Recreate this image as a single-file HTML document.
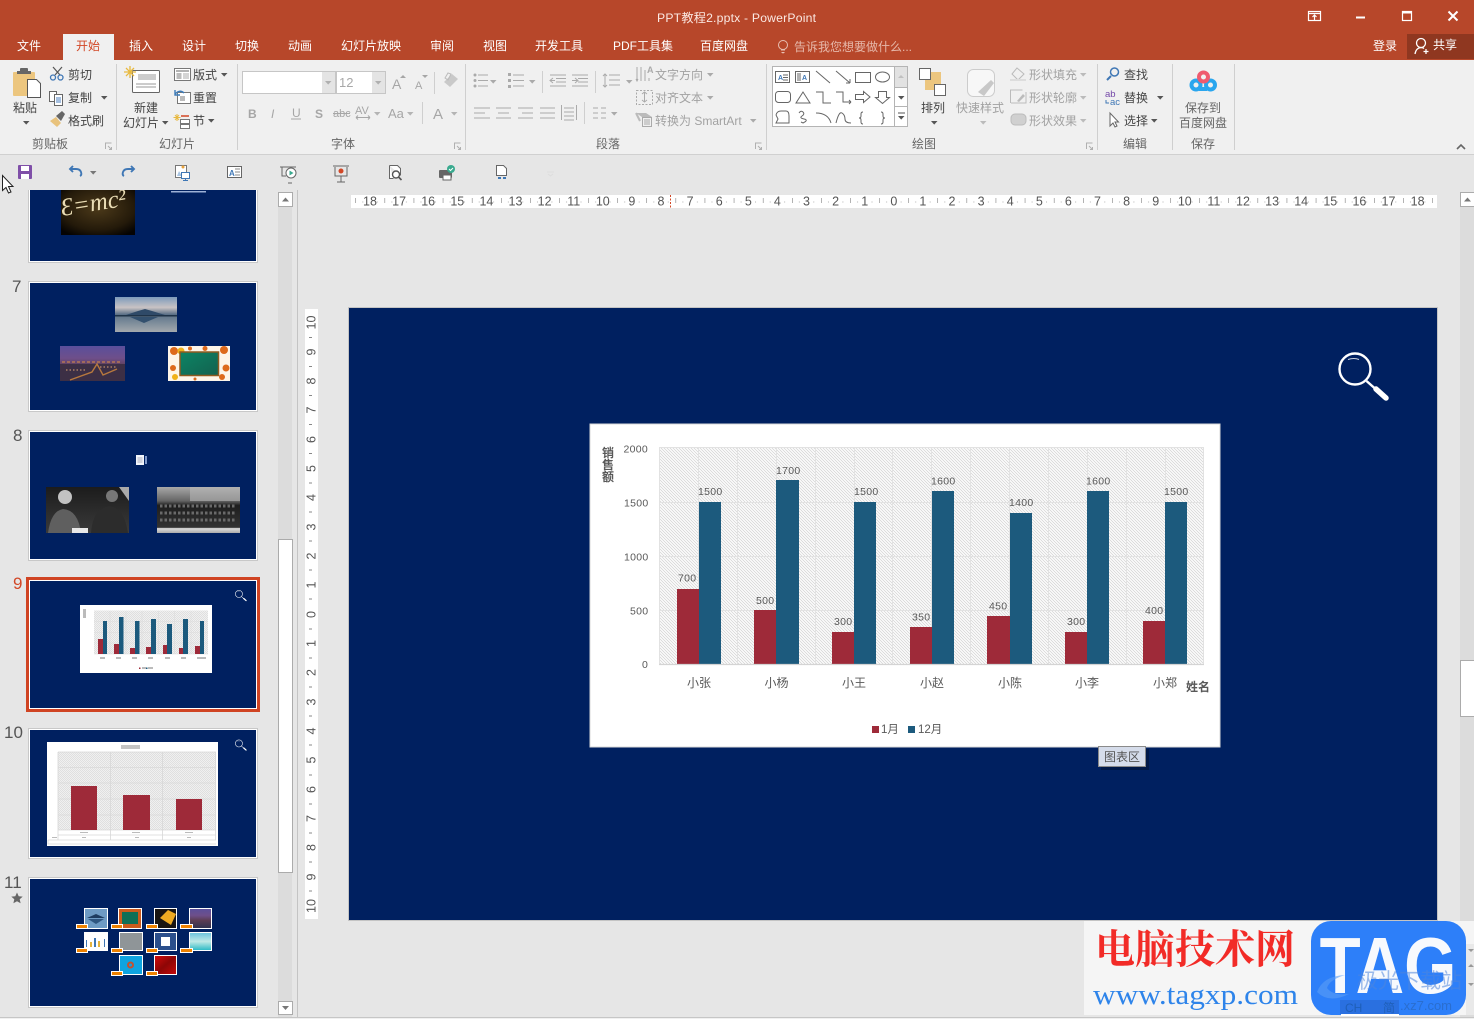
<!DOCTYPE html>
<html lang="zh-CN">
<head>
<meta charset="utf-8">
<title>PPT教程2.pptx - PowerPoint</title>
<style>
html,body{margin:0;padding:0;background:#e6e6e6;width:1474px;height:1019px;overflow:hidden}
svg{display:block;position:absolute;left:0;top:0}
text{font-family:"Liberation Sans","Noto Sans CJK SC",sans-serif;font-size:12px}
.d{fill:#444}.g{fill:#a2a2a2}.w{fill:#fff}.l{fill:#666}
.t{fill:#fbe9e3}
.n{font-size:10.5px;fill:#595959;letter-spacing:.3px}
.c{fill:#595959;text-anchor:middle}
.r{font-size:12.5px;fill:#555;text-anchor:middle}
.s{fill:#555;font-size:17px}
.ln{fill:none;stroke:#666;stroke-width:1}
.lg{fill:none;stroke:#aaa;stroke-width:1}
.sep{stroke:#cfcfcf;stroke-width:1}
</style>
</head>
<body>
<svg width="1474" height="1019" viewBox="0 0 1474 1019" xmlns="http://www.w3.org/2000/svg">
<defs>
<pattern id="h" width="3" height="3" patternUnits="userSpaceOnUse"><rect width="3" height="3" fill="#fff"/><path d="M-1 2L1 4M0 0L3 3M2-1L4 1" stroke="#d6d6d6" stroke-width=".85"/></pattern>
<pattern id="h2" width="2" height="2" patternUnits="userSpaceOnUse"><rect width="2" height="2" fill="#f4f4f4"/><path d="M0 0L2 2" stroke="#d8d8d8" stroke-width=".7"/></pattern>
<pattern id="rt" x="355.500" y="0" width="29.100" height="20" patternUnits="userSpaceOnUse"><path d="M0 3v5" stroke="#666" stroke-width="1"/><circle cx="7.300" cy="7" r=".5" fill="#999"/><circle cx="21.800" cy="7" r=".5" fill="#999"/></pattern>
<symbol id="ar" width="7" height="4" overflow="visible"><path d="M0 0h6.500L3.200 3.600z"/></symbol>
<symbol id="mag" viewBox="0 0 52 50" overflow="visible"><circle cx="17" cy="17" r="15.500" fill="none" stroke="#fff" stroke-width="2.400"/><path d="M10 7.500q6-2 11 0" fill="none" stroke="#fff" stroke-width="1" opacity=".8"/><path d="M28.500 29L37 36.500" stroke="#fff" stroke-width="2.400"/><path d="M38 37L48 46" stroke="#fff" stroke-width="5.500" stroke-linecap="round"/></symbol>
<linearGradient id="mt" x1="0" y1="0" x2="0" y2="1"><stop offset="0" stop-color="#7d9bbb"/><stop offset=".3" stop-color="#c9c3c4"/><stop offset=".5" stop-color="#5a6f86"/><stop offset=".62" stop-color="#6d8092"/><stop offset="1" stop-color="#a3a9ad"/></linearGradient>
<linearGradient id="ct" x1="0" y1="0" x2="0" y2="1"><stop offset="0" stop-color="#5a4f9c"/><stop offset=".35" stop-color="#6e4f8a"/><stop offset=".6" stop-color="#5b3c52"/><stop offset="1" stop-color="#2f3350"/></linearGradient>
<linearGradient id="gb" x1="0" y1="0" x2="1" y2="1"><stop offset="0" stop-color="#0c8464"/><stop offset="1" stop-color="#13614f"/></linearGradient>
<radialGradient id="em" cx=".5" cy=".4" r=".7"><stop offset="0" stop-color="#4c3a1a"/><stop offset=".7" stop-color="#241a0a"/><stop offset="1" stop-color="#050302"/></radialGradient>
<linearGradient id="bw" x1="0" y1="0" x2="0" y2="1"><stop offset="0" stop-color="#1c1c1c"/><stop offset="1" stop-color="#3a3a3a"/></linearGradient>
<linearGradient id="bw2" x1="0" y1="0" x2="0" y2="1"><stop offset="0" stop-color="#a8a8a8"/><stop offset=".3" stop-color="#666"/><stop offset=".4" stop-color="#1e1e1e"/><stop offset=".88" stop-color="#333"/><stop offset=".9" stop-color="#ddd"/><stop offset="1" stop-color="#aaa"/></linearGradient>
<linearGradient id="rd" x1="0" y1="0" x2="1" y2="1"><stop offset="0" stop-color="#d60b0b"/><stop offset=".5" stop-color="#8d0606"/><stop offset="1" stop-color="#c50909"/></linearGradient>
<linearGradient id="se" x1="0" y1="0" x2="0" y2="1"><stop offset="0" stop-color="#6ac1dc"/><stop offset=".5" stop-color="#bfe9e6"/><stop offset="1" stop-color="#28b9c4"/></linearGradient>
<clipPath id="e"><rect x="61" y="190" width="74" height="45"/></clipPath>
</defs>

<!-- base -->
<rect width="1474" height="1019" fill="#e6e6e6"/>
<rect width="1474" height="60" fill="#b7472a"/>
<rect x="63" y="34" width="51" height="26" fill="#f0f0f0"/>
<rect x="1407" y="34" width="67" height="25" fill="#8f3720"/>
<rect y="60" width="1474" height="94" fill="#f0f0f0"/>
<rect y="154" width="1474" height="1" fill="#d0d0d0"/>

<!-- title -->
<text x="657" y="22" class="t" textLength="159" lengthAdjust="spacing" style="font-size:12.200px">PPT教程2.pptx - PowerPoint</text>
<g fill="none" stroke="#fff" stroke-width="1.200">
<rect x="1308.500" y="11.500" width="12" height="9"/><path d="M1309 13.500h11M1314.500 20v-5M1312.500 17l2-2 2 2"/>
<path d="M1356 17.500h9" stroke-width="2"/>
<rect x="1402.500" y="11.500" width="9" height="9"/><path d="M1402 12.500h10" stroke-width="2"/>
<path d="M1448.500 11.500l9 9M1457.500 11.500l-9 9" stroke-width="2"/>
</g>

<!-- tabs -->
<text x="17" y="50" class="w">文件</text>
<text x="76" y="50" fill="#d24726">开始</text>
<text x="129" y="50" class="w">插入</text>
<text x="182" y="50" class="w">设计</text>
<text x="235" y="50" class="w">切换</text>
<text x="288" y="50" class="w">动画</text>
<text x="341" y="50" class="w">幻灯片放映</text>
<text x="430" y="50" class="w">审阅</text>
<text x="483" y="50" class="w">视图</text>
<text x="535" y="50" class="w">开发工具</text>
<text x="613" y="50" class="w">PDF工具集</text>
<text x="700" y="50" class="w">百度网盘</text>
<g fill="none" stroke="#e8bfb2" stroke-width="1"><circle cx="783" cy="45" r="4.500"/><path d="M781 50h4M781.500 52.500h3M783 53.500v.5"/></g>
<text x="794" y="51" fill="#e6b8aa">告诉我您想要做什么...</text>
<text x="1373" y="50" class="w">登录</text>
<text x="1433" y="49" class="w">共享</text>
<g fill="none" stroke="#fff" stroke-width="1.300"><circle cx="1421" cy="43" r="4.500"/><path d="M1415 54q1-6 6-6.500q2 0 3 1M1426 49v5M1423.500 51.500h5"/></g>

<!-- ribbon separators -->
<g class="sep"><path d="M116.500 64v86M237.500 64v86M465.500 64v86M766.500 64v86M1097.500 64v86M1172.500 64v86M1234.500 64v86"/></g>
<text x="32" y="148" class="l">剪贴板</text><text x="159" y="148" class="l">幻灯片</text><text x="331" y="148" class="l">字体</text><text x="596" y="148" class="l">段落</text><text x="912" y="148" class="l">绘图</text><text x="1123" y="148" class="l">编辑</text><text x="1191" y="148" class="l">保存</text>
<g fill="none" stroke="#b0b0b0" stroke-width="1">
<path d="M105.500 149v-6h6M108 146l3 3M111.500 147v2.500h-2.500"/><path d="M454.500 149v-6h6M457 146l3 3M460.500 147v2.500h-2.500"/><path d="M755.500 149v-6h6M758 146l3 3M761.500 147v2.500h-2.500"/><path d="M1086.500 149v-6h6M1089 146l3 3M1092.500 147v2.500h-2.500"/>
</g>
<path d="M1457 149l4-4 4 4" fill="none" stroke="#666" stroke-width="1.600"/>

<!-- clipboard -->
<rect x="13" y="72" width="22" height="24" rx="1" fill="#ecc67f"/><rect x="20" y="68" width="8" height="4" rx="1" fill="#666"/><rect x="17" y="71" width="14" height="3" fill="#666"/>
<path d="M27.500 79.500h9l4 4v14h-13z" fill="#fff" stroke="#555"/>
<text x="13" y="112" class="d">粘贴</text><use href="#ar" x="23" y="121" fill="#555"/>
<g fill="none" stroke="#555" stroke-width="1.200"><path d="M53 67l7 8M62 67l-7 8"/></g><g fill="none" stroke="#3f77b5" stroke-width="1.300"><circle cx="53" cy="77.500" r="2.500"/><circle cx="60.500" cy="77.500" r="2.500"/></g>
<text x="68" y="79" class="d">剪切</text>
<g fill="#fff" stroke="#666"><rect x="49.500" y="91.500" width="7" height="10"/><rect x="54.500" y="94.500" width="8" height="11"/></g><path d="M56 98h5M56 100h5M56 102h5" stroke="#4a7fc0"/>
<text x="68" y="102" class="d">复制</text><use href="#ar" x="101" y="96" fill="#555"/>
<path d="M50 121l6-4 5 6-4 4z" fill="#e8c27c"/><path d="M56 116l6-5 3 3-4 7z" fill="#666"/>
<text x="68" y="125" class="d">格式刷</text>

<!-- slides group -->
<rect x="132.500" y="70.500" width="27" height="22" rx="1" fill="#fff" stroke="#666"/><rect x="138" y="74" width="18" height="6" fill="#ccc"/><path d="M136 84h20M136 87h20" stroke="#999"/>
<g stroke="#e8b93f" stroke-width="1.300"><path d="M130 66v12M124 72h12M126 68l8 8M134 68l-8 8"/></g>
<text x="134" y="112" class="d">新建</text><text x="123" y="127" class="d">幻灯片</text><use href="#ar" x="162" y="121" fill="#555"/>
<rect x="174.500" y="68.500" width="16" height="12" fill="#fff" stroke="#777"/><path d="M176 71h13" stroke="#999" stroke-width="1.500"/><rect x="176.500" y="73" width="5" height="6" fill="#bbb"/><path d="M183 74h6M183 76h6M183 78h6" stroke="#aaa"/>
<text x="193" y="79" class="d">版式</text><use href="#ar" x="221" y="73" fill="#555"/>
<rect x="177.500" y="92.500" width="13" height="11" fill="#fff" stroke="#777"/><path d="M175 94q5-5 9-1M175 90v5h5" fill="none" stroke="#3d7bb8" stroke-width="1.400"/><rect x="180" y="96" width="5" height="5" fill="#bbb"/>
<text x="193" y="102" class="d">重置</text>
<g stroke="#e8b93f"><path d="M177 114v7M173.500 117.500h7M175 115l4 5M179 115l-4 5"/></g><path d="M181 116h8" stroke="#d24726" stroke-width="1.500"/><rect x="180.500" y="119.500" width="9" height="4" fill="#fff" stroke="#777"/><rect x="180.500" y="124.500" width="9" height="4" fill="#fff" stroke="#777"/>
<text x="193" y="125" class="d">节</text><use href="#ar" x="208" y="119" fill="#555"/>

<!-- font group -->
<rect x="242.500" y="71.500" width="93" height="22" fill="#fff" stroke="#c6c6c6"/><rect x="322" y="72" width="13" height="21" fill="#e4e4e4"/><use href="#ar" x="325" y="81" fill="#b0b0b0"/>
<rect x="336.500" y="71.500" width="49" height="22" fill="#fff" stroke="#c6c6c6"/><rect x="372" y="72" width="13" height="21" fill="#e4e4e4"/><use href="#ar" x="375" y="81" fill="#b0b0b0"/>
<text x="339" y="87" fill="#a8a8a8" style="font-size:13px">12</text>
<text x="392" y="89" fill="#a6a6a6" style="font-size:14px">A</text><path d="M400 78l3-3 3 3z" fill="#a6a6a6"/>
<text x="415" y="89" fill="#a6a6a6" style="font-size:11px">A</text><path d="M422 75l3 3 3-3z" fill="#a6a6a6"/>
<path d="M434.500 72v22" class="sep"/>
<path d="M444 82l8-8 6 5-8 8z" fill="#c9c9c9"/><path d="M445 78l3-5 3 1-3 6z" fill="none" stroke="#bbb"/>
<g><text x="248" y="118" style="font-weight:bold;fill:#a6a6a6">B</text><text x="271" y="118" style="font-style:italic;fill:#a6a6a6">I</text><text x="292" y="117" style="fill:#a6a6a6">U</text><path d="M291 119h10" stroke="#a6a6a6"/><text x="315" y="118" style="font-weight:bold;fill:#a6a6a6">S</text><text x="333" y="117" style="font-size:11px;fill:#a6a6a6">abc</text><path d="M333 113.500h17" stroke="#a6a6a6"/><text x="355" y="114" style="font-size:11px;fill:#a6a6a6">AV</text><path d="M356 117.500h14M356 117.500l2-2M356 117.500l2 2M370 117.500l-2-2M370 117.500l-2 2" stroke="#a6a6a6" fill="none"/><text x="388" y="118" style="font-size:13px;fill:#a6a6a6">Aa</text><text x="433" y="119" style="font-size:15px;fill:#a6a6a6">A</text></g>
<g fill="#b4b4b4"><use href="#ar" x="374" y="112"/><use href="#ar" x="407" y="112"/><use href="#ar" x="451" y="112"/></g>
<path d="M422.500 102v22" class="sep"/>

<!-- paragraph -->
<g class="lg"><path d="M478 75h10M478 80.500h10M478 86h10M513 75h11M513 80.500h11M513 86h11"/></g>
<g fill="#aaa"><circle cx="475" cy="75" r="1.500"/><circle cx="475" cy="80.500" r="1.500"/><circle cx="475" cy="86" r="1.500"/><rect x="508" y="73" width="3" height="3"/><rect x="508" y="79" width="3" height="3"/><rect x="508" y="85" width="3" height="3"/><use href="#ar" x="490" y="80"/><use href="#ar" x="529" y="80"/><use href="#ar" x="626" y="80"/><use href="#ar" x="707" y="73"/><use href="#ar" x="707" y="96"/><use href="#ar" x="750" y="119"/><use href="#ar" x="611" y="112"/></g>
<path d="M542.500 71v22M595.500 71v22M584.500 102v22" class="sep"/>
<g class="lg"><path d="M550 75h16M556 78.500h10M556 82h10M550 86h16M550 80.500h5M553 78l-3 2.500 3 2.500M572 75h16M578 78.500h10M578 82h10M572 86h16M572 80.500h5M575 78l3 2.500-3 2.500"/>
<path d="M609 75h11M609 80h11M609 85h11M605 74v13M603 76l2-2 2 2M603 85l2 2 2-2"/>
<path d="M474 108h16M474 113h11M474 118h16M496 108h15M498 113h11M496 118h15M518 108h15M522 113h11M518 118h15M540 108h15M540 113h15M540 118h15M561.500 105v15M576.500 105v15M564 108h10M564 112h10M564 116h10M564 120h10M593 108h5M593 113h5M593 118h5M601 108h5M601 113h5M601 118h5"/>
<path d="M637 67v14M641 67v14M645 70v11M649 78v3M636 79l1 2 1-2"/>
<rect x="636.500" y="90.500" width="16" height="14" stroke-dasharray="2 1.500"/><path d="M644.500 92v10M642 94l2.500-2 2.500 2M642 100l2.500 2 2.500-2"/>
<rect x="642.500" y="117.500" width="9" height="9"/><path d="M644 120h6M644 122h6M644 124h6"/></g>
<path d="M636 113h10l6 4h-10z" fill="#bbb"/><path d="M636 113l4 8" stroke="#bbb" stroke-width="2"/>
<text x="647" y="73" style="font-size:9px;fill:#aaa;font-weight:bold">A</text>
<text x="655" y="79" class="g">文字方向</text><text x="655" y="102" class="g">对齐文本</text><text x="655" y="125" class="g">转换为 SmartArt</text>

<!-- shapes gallery -->
<rect x="772.500" y="66.500" width="135" height="60" fill="#fff" stroke="#b4b4b4"/>
<rect x="895" y="67" width="12" height="20" fill="#e2e2e2"/><path d="M894.500 66v61M895 87.500h13M895 106.500h13" stroke="#b4b4b4" fill="none"/>
<path d="M898 78l3-3 3 3z" fill="#c0c0c0"/><use href="#ar" x="898" y="96" fill="#555"/><path d="M898 113h7" stroke="#555"/><use href="#ar" x="898" y="116" fill="#555"/>
<g class="ln">
<rect x="775.500" y="71.500" width="14" height="11"/><path d="M783 75h5M783 77.500h5M783 80h5"/>
<rect x="795.500" y="71.500" width="14" height="11"/><path d="M798 73v8M800 73v8"/>
<path d="M816 71l14 12M836 71l14 12M850 83h-4M850 83v-4"/>
<rect x="855.500" y="72.500" width="15" height="10"/><ellipse cx="882.500" cy="77" rx="7" ry="5"/>
<rect x="775.500" y="91.500" width="15" height="11" rx="3"/><path d="M803 92l-7 11h14zM816 92h7v11h8M836 92h7v10h8M851 102l-2-2M851 102l-2 2"/>
<path d="M855.500 94.500h8v-3l6.500 5.500-6.500 5.500v-3h-8zM878.500 91.500h8v6h3l-7 6-7-6h3z"/>
<path d="M776 115q1-4 5-4h5q3 0 3 5v7h-13l2-4-2-4M799 113q2-3 4-1t-1 4 2 3-1 4l-2-1M816 113q12 0 15 10M836 123q3-12 6-10t3 6 6 4"/>
<path d="M863 112q-2 0-2 2v2q0 2-2 2q2 0 2 2v2q0 2 2 2M881 112q2 0 2 2v2q0 2 2 2q-2 0-2 2v2q0 2-2 2"/>
</g>
<text x="778" y="80" style="font-size:7px;fill:#3f77b5;font-weight:bold">A</text><text x="802" y="80" style="font-size:7px;fill:#3f77b5;font-weight:bold">A</text>

<!-- arrange -->
<rect x="925" y="72" width="16" height="18" fill="#ecc67f"/><rect x="919.500" y="68.500" width="11" height="11" fill="#fff" stroke="#666"/><rect x="934.500" y="84.500" width="11" height="11" fill="#fff" stroke="#666"/>
<text x="921" y="112" class="d">排列</text><use href="#ar" x="931" y="121" fill="#555"/>
<rect x="967.500" y="69.500" width="27" height="27" rx="6" fill="#f7f7f7" stroke="#ccc"/><path d="M978 92l13-12 3 3-10 13z" fill="#c8c8c8"/>
<text x="956" y="112" class="g">快速样式</text><use href="#ar" x="980" y="121" fill="#bbb"/>
<path d="M1017 68l7 6-6 6-6-6z" fill="none" stroke="#bbb"/><rect x="1010" y="79" width="16" height="2" fill="#ddd"/>
<path d="M1010.500 103v-13h12M1026 92v11h-15" fill="none" stroke="#bbb"/><path d="M1017 101l6-7 2 2-6 6z" fill="#bbb"/>
<rect x="1011" y="114" width="15" height="11" rx="4" fill="#d0d0d0" stroke="#bbb"/>
<text x="1029" y="79" class="g">形状填充</text><text x="1029" y="102" class="g">形状轮廓</text><text x="1029" y="125" class="g">形状效果</text>
<g fill="#bbb"><use href="#ar" x="1080" y="73"/><use href="#ar" x="1080" y="96"/><use href="#ar" x="1080" y="119"/></g>

<!-- edit -->
<circle cx="1114.500" cy="72" r="4" fill="none" stroke="#3f77b5" stroke-width="1.500"/><path d="M1111 76l-4 4" stroke="#3f77b5" stroke-width="2"/>
<text x="1124" y="79" class="d">查找</text>
<text x="1105" y="97" style="font-size:9.500px;fill:#7448a8">ab</text><text x="1110" y="105" style="font-size:9.500px;fill:#3f77b5">ac</text><path d="M1106 100v3h3" stroke="#3f77b5" fill="none"/>
<text x="1124" y="102" class="d">替换</text><use href="#ar" x="1157" y="96" fill="#555"/>
<path d="M1110 113v13l3-3 2 4 2-1-2-4h3.500z" fill="#fff" stroke="#666"/>
<text x="1124" y="125" class="d">选择</text><use href="#ar" x="1151" y="119" fill="#555"/>

<!-- baidu -->
<g fill="none" stroke-width="4"><circle cx="1196" cy="85" r="4.500" stroke="#2aa6ee"/><circle cx="1210.500" cy="85" r="4.500" stroke="#2aa6ee"/><path d="M1199 89h8" stroke="#2aa6ee"/><circle cx="1203.500" cy="77" r="4.500" stroke="#ef5a6e"/></g>
<text x="1185" y="112" class="l">保存到</text><text x="1179" y="127" class="l">百度网盘</text>

<!-- qat -->
<rect x="18" y="165" width="14" height="14" rx="1" fill="#7f4fa8"/><rect x="21" y="166" width="8" height="5" fill="#fff"/><rect x="21" y="174" width="8" height="5" fill="#fff"/>
<path d="M80 176q2-1 1-4-1-3-5-3h-6M73 166l-3 3 3 3" fill="none" stroke="#3f77b5" stroke-width="1.900"/>
<use href="#ar" x="90" y="171" fill="#777"/>
<path d="M124 176q-2-1-1-4 1-3 5-3h6M131 166l3 3-3 3" fill="none" stroke="#3f77b5" stroke-width="1.900"/>
<path d="M175.500 165.500h11v12h-11z" fill="#fff" stroke="#777"/><circle cx="183" cy="167" r="1.500" fill="#e8a33d"/><path d="M177 176l2-5 3 5z" fill="#a9c5e2"/><rect x="181.500" y="172.500" width="8" height="6" fill="#fff" stroke="#3f77b5"/><path d="M185.500 178.500v2M183 180.500h5" stroke="#3f77b5"/>
<rect x="227.500" y="166.500" width="14" height="11" fill="#fff" stroke="#666"/><text x="229" y="176" style="font-size:8px;fill:#3f77b5;font-weight:bold">A</text><path d="M235 169h5M235 172h5M235 175h5" stroke="#888"/>
<path d="M280 167h16M282 167v9h4M288 183h4M290 176v2" stroke="#666" fill="none"/><circle cx="291" cy="173" r="5" fill="#fff" stroke="#666"/><path d="M289.500 170.500l4 2.500-4 2.500z" fill="#3aaa8f"/>
<path d="M333 166h16M335 167v9h12v-9M341 176v6M337 182h8" stroke="#666" fill="none"/><circle cx="341" cy="171" r="2.500" fill="#d24726"/>
<path d="M389.500 165.500h8l3 3v7M389.500 165.500v13h4" fill="#fff" stroke="#666"/><circle cx="396" cy="174.500" r="3.500" fill="#fff" stroke="#555" stroke-width="1.400"/><path d="M398.500 177l3 3" stroke="#555" stroke-width="1.600"/>
<rect x="439" y="170" width="13" height="8" rx="1" fill="#666"/><rect x="443" y="175" width="8" height="5" fill="#fff" stroke="#666"/><circle cx="451" cy="169" r="4" fill="#3aaa8f"/><path d="M449 169l1.500 1.500 2.500-2.500" stroke="#fff" fill="none"/>
<path d="M496.500 165.500h7l3 3v7h-10z" fill="#fff" stroke="#666"/><path d="M498 178h3M503 178h3" stroke="#3f77b5" stroke-width="2"/>
<path d="M547 172h7M548 174l2.500 2 2.500-2" stroke="#ddd" fill="none"/>

<!-- thumbs pane -->
<path d="M297.500 190v827" stroke="#c4c4c4"/>
<rect x="278" y="192" width="14" height="825" fill="#dcdcdc"/>
<rect x="278.500" y="192.500" width="14" height="14" fill="#fff" stroke="#ababab"/><path d="M282 201.500l3.500-4 3.500 4z" fill="#777"/>
<rect x="278.500" y="539.500" width="14" height="333" fill="#fff" stroke="#ababab"/>
<rect x="278.500" y="1001.500" width="14" height="13" fill="#fff" stroke="#ababab"/><path d="M282 1006h7l-3.500 4z" fill="#777"/>

<!-- slide 6 -->
<rect x="29" y="190" width="228.500" height="72" fill="#fff"/><rect x="30" y="190" width="226" height="71" fill="#002060"/>
<path d="M28.500 190v72.500h229V190" fill="none" stroke="#c8c8c8"/>
<rect x="61" y="190" width="74" height="45" fill="url(#em)"/>
<g clip-path="url(#e)"><text transform="translate(62 216) rotate(-9)" style="font-family:'Liberation Serif',serif;font-style:italic;font-size:25px;fill:#e9dcb4">Ɛ=mc²</text></g>
<rect x="171" y="191" width="35" height="1.500" fill="#9db1d6"/>

<!-- slide 7 -->
<text x="12" y="292" class="s">7</text>
<rect x="28.500" y="281.500" width="229" height="130" fill="#fff" stroke="#c8c8c8"/><rect x="30" y="283" width="226" height="127" fill="#002060"/>
<rect x="115" y="297" width="62" height="35" fill="url(#mt)"/><path d="M126 315l12-4 7-2 7 2 13 4z" fill="#2f4a68"/><path d="M115 315h62v1.500h-62z" fill="#1f3348"/><path d="M130 317l14 6 14-6z" fill="#33506e"/>
<rect x="60" y="346" width="65" height="35" fill="url(#ct)"/><path d="M60 364h65v17H60z" fill="#3c2f45"/><path d="M70 380l22-8 5-8 6 11 14-6" stroke="#e0913c" stroke-width="1.400" fill="none" opacity=".75"/><path d="M62 362h60" stroke="#c9824e" stroke-width="2" stroke-dasharray="3 2" opacity=".6"/><path d="M66 370h20M100 367h16" stroke="#d8a070" stroke-width="1.500" stroke-dasharray="1.500 2" opacity=".7"/>
<rect x="168" y="346" width="62" height="35" fill="#fdf5e9"/><g fill="#dd6a1c"><circle cx="174" cy="351" r="4"/><circle cx="190" cy="348.500" r="2"/><circle cx="205" cy="348.500" r="2.500"/><circle cx="224" cy="350" r="4"/><circle cx="173" cy="368" r="3"/><circle cx="226" cy="368" r="3.500"/><circle cx="222" cy="377" r="3"/><circle cx="195" cy="379" r="1.500"/></g><circle cx="181" cy="351" r="3.500" fill="#f0b21b"/><circle cx="175" cy="377" r="3" fill="#f0b21b"/><rect x="180" y="352" width="38.500" height="23.500" fill="url(#gb)" stroke="#8e5a20" stroke-width="1.500"/>

<!-- slide 8 -->
<text x="13" y="441" class="s">8</text>
<rect x="28.500" y="430.500" width="229" height="130" fill="#fff" stroke="#c8c8c8"/><rect x="30" y="432" width="226" height="127" fill="#002060"/>
<rect x="136" y="455" width="8" height="10" fill="#f2f5fb"/><rect x="145" y="456" width="2" height="8" fill="#7d96c7"/><path d="M137.500 458h5M137.500 460h5M137.500 462h5" stroke="#aab"/>
<rect x="46" y="487" width="83" height="46" fill="url(#bw)"/><circle cx="65" cy="497" r="7" fill="#c2c2c2"/><path d="M48 533q3-22 15-24 15 1 18 24z" fill="#5f5f5f"/><circle cx="112" cy="496" r="6" fill="#777"/><path d="M91 533q2-25 19-27 14 2 18 27z" fill="#2c2c2c"/><path d="M119 487h10v14z" fill="#aaa"/><rect x="72" y="528" width="16" height="5" fill="#e8e8e8"/>
<rect x="157" y="487" width="83" height="46" fill="url(#bw2)"/><path d="M190 487h50v14h-50z" fill="#b8b8b8" opacity=".6"/><path d="M160 506h76M160 513h76M160 520h76" stroke="#6a6a6a" stroke-width="3" stroke-dasharray="2.500 2"/>

<!-- slide 9 -->
<text x="13" y="589" fill="#d24726" style="font-size:17px">9</text>
<rect x="27.500" y="578.500" width="231" height="132" fill="#002060" stroke="#d04423" stroke-width="3"/><rect x="29.500" y="580.500" width="227" height="128" fill="none" stroke="#fff"/>
<use href="#mag" x="235" y="590" width="12" height="11.500"/>
<rect x="80" y="605" width="132" height="68" fill="#fff"/><rect x="94" y="610.500" width="114" height="43.500" fill="url(#h2)"/>
<g stroke="#dcdcdc" stroke-width=".6"><path d="M94 621.500h114M94 632.500h114M94 643h114M94 654h114M110 611v43M126 611v43M142 611v43M158.500 611v43M174.500 611v43M191 611v43"/></g>
<g fill="#9e2a39"><rect x="98" y="639" width="5" height="15"/><rect x="114" y="644" width="5" height="10"/><rect x="130" y="648" width="5" height="6"/><rect x="146" y="647" width="5" height="7"/><rect x="163" y="645" width="5" height="9"/><rect x="179" y="648" width="5" height="6"/><rect x="195" y="646" width="5" height="8"/></g>
<g fill="#1c5a7d"><rect x="103" y="621" width="4" height="33"/><rect x="119" y="617" width="4.500" height="37"/><rect x="135" y="621" width="4.500" height="33"/><rect x="151" y="619" width="5" height="35"/><rect x="167" y="624" width="5" height="30"/><rect x="183" y="619" width="5" height="35"/><rect x="200" y="621" width="4" height="33"/></g>
<g fill="#bbb"><rect x="83" y="609" width="3" height="9"/><rect x="100" y="657" width="5" height="2"/><rect x="116" y="657" width="5" height="2"/><rect x="132" y="657" width="5" height="2"/><rect x="148" y="657" width="5" height="2"/><rect x="165" y="657" width="5" height="2"/><rect x="181" y="657" width="5" height="2"/><rect x="197" y="657" width="9" height="2"/><rect x="142" y="667" width="4" height="2"/><rect x="148" y="667" width="5" height="2"/></g>
<rect x="139" y="667.500" width="1.500" height="1.500" fill="#9e2a39"/><rect x="146" y="667.500" width="1.500" height="1.500" fill="#1c5a7d"/>

<!-- slide 10 -->
<text x="4" y="738" class="s">10</text>
<rect x="28.500" y="728.500" width="229" height="130" fill="#fff" stroke="#c8c8c8"/><rect x="30" y="730" width="226" height="127" fill="#002060"/>
<use href="#mag" x="235" y="739.500" width="12" height="11.500"/>
<rect x="47" y="742" width="171" height="104" fill="#fff"/><rect x="121" y="745" width="19" height="4" fill="#c4c4c4"/>
<rect x="58" y="752" width="158" height="78" fill="url(#h2)"/>
<g stroke="#d8d8d8" stroke-width=".8" fill="none"><path d="M58 752h158M58 767.500h158M58 783h158M58 799h158M58 815h158M58 830h158M58 752v88M110.500 752v88M162.500 752v88M215.500 752v88M48 840h168M58 835h158M48 840v4h168"/></g>
<g fill="#9e2a39"><rect x="71" y="786" width="26" height="44"/><rect x="123" y="795" width="27" height="35"/><rect x="176" y="799" width="26" height="31"/></g>
<g fill="#bbb"><rect x="80" y="832" width="8" height="1"/><rect x="132" y="832" width="8" height="1"/><rect x="185" y="832" width="8" height="1"/><rect x="82" y="837" width="4" height="1"/><rect x="135" y="837" width="4" height="1"/><rect x="187" y="837" width="4" height="1"/><rect x="52" y="837" width="5" height="1"/></g>

<!-- slide 11 -->
<text x="4" y="888" class="s">11</text>
<path d="M17 892.500l1.700 3.700 4 .4-3 2.700.9 3.900-3.600-2-3.600 2 .9-3.900-3-2.700 4-.4z" fill="#666"/>
<rect x="28.500" y="877.500" width="229" height="130" fill="#fff" stroke="#c8c8c8"/><rect x="30" y="879" width="226" height="127" fill="#002060"/>
<g stroke="#fff" stroke-width="1">
<rect x="84.500" y="908.500" width="23" height="20" fill="#6e9bc4"/>
<rect x="118.500" y="908.500" width="23" height="20" fill="#cc5b1d"/><rect x="122" y="912" width="16" height="12" fill="#0f6f57" stroke="none"/>
<rect x="154.500" y="908.500" width="22" height="20" fill="#191512"/><path d="M160 918l8-8 8 4-5 11z" fill="#eeaa22" stroke="none"/>
<rect x="189.500" y="908.500" width="22" height="20" fill="url(#ct)"/>
<rect x="84.500" y="932.500" width="23" height="18" fill="#fff"/>
<rect x="119.500" y="932.500" width="23" height="18" fill="#8f9598"/>
<rect x="154.500" y="932.500" width="22" height="18" fill="#2b4f8c"/><rect x="161" y="937" width="9" height="9" fill="#fff" stroke="none"/>
<rect x="189.500" y="932.500" width="22" height="18" fill="url(#se)"/>
<rect x="119.500" y="955.500" width="23" height="19" fill="#0fa4e0"/><circle cx="130.500" cy="965" r="2.500" fill="none" stroke="#c5512f" stroke-width="2"/>
<rect x="154.500" y="955.500" width="22" height="19" fill="url(#rd)"/>
</g>
<path d="M87 918l9-4 9 4z" fill="#1e3c60"/><path d="M88 919l8 5 8-5z" fill="#2f5680"/>
<g fill="#3f77b5"><rect x="86" y="940" width="1" height="7"/><rect x="94" y="938" width="2" height="9"/><rect x="104" y="939" width="1" height="8"/></g><g fill="#e7b53c"><rect x="90" y="942" width="2" height="5"/><rect x="98" y="941" width="2" height="6"/></g>
<g fill="#ef8200" stroke="#fff" stroke-width="1">
<rect x="76.500" y="924.500" width="11" height="4"/><rect x="111.500" y="924.500" width="11" height="4"/><rect x="146.500" y="924.500" width="11" height="4"/><rect x="180.500" y="924.500" width="12" height="4"/>
<rect x="76.500" y="948.500" width="11" height="4"/><rect x="111.500" y="948.500" width="11" height="4"/><rect x="146.500" y="948.500" width="11" height="4"/><rect x="180.500" y="948.500" width="12" height="4"/>
<rect x="111.500" y="971.500" width="11" height="4"/><rect x="146.500" y="971.500" width="11" height="4"/>
</g>

<!-- status -->
<rect y="1017" width="1474" height="1" fill="#c6c6c6"/><rect y="1018" width="1474" height="1" fill="#f0f0f0"/>

<!-- cursor -->
<path d="M2.500 175.500v15l3.500-3 2.500 5.500 2.500-1-2.500-5.500h4.500z" fill="#fff" stroke="#222"/>

<!-- rulers -->
<rect x="351" y="195" width="1086" height="13" fill="#fff"/>
<g transform="translate(0,195)"><rect x="351" y="0" width="1086" height="13" fill="url(#rt)"/></g>
<g>
<text x="370" y="205.500" class="r">18</text><text x="399.100" y="205.500" class="r">17</text><text x="428.200" y="205.500" class="r">16</text><text x="457.300" y="205.500" class="r">15</text><text x="486.400" y="205.500" class="r">14</text><text x="515.500" y="205.500" class="r">13</text><text x="544.600" y="205.500" class="r">12</text><text x="573.700" y="205.500" class="r">11</text><text x="602.800" y="205.500" class="r">10</text><text x="631.900" y="205.500" class="r">9</text><text x="661" y="205.500" class="r">8</text><text x="690.100" y="205.500" class="r">7</text><text x="719.200" y="205.500" class="r">6</text><text x="748.300" y="205.500" class="r">5</text><text x="777.400" y="205.500" class="r">4</text><text x="806.500" y="205.500" class="r">3</text><text x="835.600" y="205.500" class="r">2</text><text x="864.700" y="205.500" class="r">1</text><text x="893.800" y="205.500" class="r">0</text><text x="922.900" y="205.500" class="r">1</text><text x="952" y="205.500" class="r">2</text><text x="981.100" y="205.500" class="r">3</text><text x="1010.200" y="205.500" class="r">4</text><text x="1039.300" y="205.500" class="r">5</text><text x="1068.400" y="205.500" class="r">6</text><text x="1097.500" y="205.500" class="r">7</text><text x="1126.600" y="205.500" class="r">8</text><text x="1155.700" y="205.500" class="r">9</text><text x="1184.800" y="205.500" class="r">10</text><text x="1213.900" y="205.500" class="r">11</text><text x="1243" y="205.500" class="r">12</text><text x="1272.100" y="205.500" class="r">13</text><text x="1301.200" y="205.500" class="r">14</text><text x="1330.300" y="205.500" class="r">15</text><text x="1359.400" y="205.500" class="r">16</text><text x="1388.500" y="205.500" class="r">17</text><text x="1417.600" y="205.500" class="r">18</text>
</g>
<path d="M670.500 195v14" stroke="#d24726" stroke-dasharray="2 1.500"/>
<rect x="305" y="309" width="13" height="610" fill="#fff"/>
<g stroke="#888" stroke-width="1"><path d="M309 337.500h3M309 366.500h3M309 395.500h3M309 424.500h3M309 453.500h3M309 483h3M309 512h3M309 541h3M309 570h3M309 599h3M309 629h3M309 658h3M309 687h3M309 716h3M309 745h3M309 775h3M309 804h3M309 833h3M309 862h3M309 891h3"/></g>
<g>
<text transform="translate(315.500 322.500) rotate(-90)" class="r">10</text><text transform="translate(315.500 352) rotate(-90)" class="r">9</text><text transform="translate(315.500 381) rotate(-90)" class="r">8</text><text transform="translate(315.500 410) rotate(-90)" class="r">7</text><text transform="translate(315.500 439.500) rotate(-90)" class="r">6</text><text transform="translate(315.500 468.500) rotate(-90)" class="r">5</text><text transform="translate(315.500 497.500) rotate(-90)" class="r">4</text><text transform="translate(315.500 527) rotate(-90)" class="r">3</text><text transform="translate(315.500 556) rotate(-90)" class="r">2</text><text transform="translate(315.500 585) rotate(-90)" class="r">1</text><text transform="translate(315.500 614.500) rotate(-90)" class="r">0</text><text transform="translate(315.500 643.500) rotate(-90)" class="r">1</text><text transform="translate(315.500 672.500) rotate(-90)" class="r">2</text><text transform="translate(315.500 702) rotate(-90)" class="r">3</text><text transform="translate(315.500 731) rotate(-90)" class="r">4</text><text transform="translate(315.500 760) rotate(-90)" class="r">5</text><text transform="translate(315.500 789.500) rotate(-90)" class="r">6</text><text transform="translate(315.500 818.500) rotate(-90)" class="r">7</text><text transform="translate(315.500 847.500) rotate(-90)" class="r">8</text><text transform="translate(315.500 877) rotate(-90)" class="r">9</text><text transform="translate(315.500 906) rotate(-90)" class="r">10</text>
</g>

<!-- right scrollbar -->
<rect x="1460" y="192" width="14" height="825" fill="#dcdcdc"/>
<rect x="1460.500" y="192.500" width="14" height="14" fill="#fff" stroke="#ababab"/><path d="M1464 201.500l3.500-4 3.500 4z" fill="#777"/>
<rect x="1460.500" y="660.500" width="14" height="56" fill="#fff" stroke="#ababab"/>

<!-- main slide -->
<rect x="348.500" y="307.500" width="1089" height="613" fill="#002060" stroke="#c4c4c4"/>
<use href="#mag" x="1338" y="352" width="52" height="50"/>

<!-- chart -->
<rect x="590" y="424" width="630" height="323" fill="#fff" stroke="#d9d9d9"/>
<rect x="659" y="447.500" width="545" height="216.500" fill="url(#h)"/>
<g stroke="#e2e2e2" stroke-width="1" fill="none">
<path d="M659 447.500h545M659 502.500h545M659 556.500h545M659 610.500h545M659.500 447v217M698.500 447v217M737.500 447v217M776.500 447v217M815.500 447v217M854.500 447v217M892.500 447v217M931.500 447v217M970.500 447v217M1009.500 447v217M1048.500 447v217M1087.500 447v217M1126.500 447v217M1165.500 447v217M1203.500 447v217"/>
</g>
<g fill="#9e2a39"><rect x="677" y="589" width="22" height="75"/><rect x="754" y="610" width="22" height="54"/><rect x="832" y="632" width="22" height="32"/><rect x="910" y="627" width="22" height="37"/><rect x="987" y="616" width="23" height="48"/><rect x="1065" y="632" width="22" height="32"/><rect x="1143" y="621" width="22" height="43"/></g>
<g fill="#1c5a7d"><rect x="699" y="502" width="22" height="162"/><rect x="776" y="480" width="23" height="184"/><rect x="854" y="502" width="22" height="162"/><rect x="932" y="491" width="22" height="173"/><rect x="1010" y="513" width="22" height="151"/><rect x="1087" y="491" width="22" height="173"/><rect x="1165" y="502" width="22" height="162"/></g>
<path d="M659 664.500h545" stroke="#d4d4d4" stroke-width="1.200"/>
<g>
<text x="623.500" y="452.500" class="n">2000</text><text x="624" y="506.500" class="n">1500</text><text x="624" y="560.500" class="n">1000</text><text x="630" y="614.500" class="n">500</text><text x="642" y="668" class="n">0</text>
<text x="678" y="581.500" class="n">700</text><text x="756" y="604" class="n">500</text><text x="834" y="625" class="n">300</text><text x="912" y="620.500" class="n">350</text><text x="989" y="609.500" class="n">450</text><text x="1067" y="625" class="n">300</text><text x="1145" y="614" class="n">400</text>
<text x="698" y="495" class="n">1500</text><text x="776" y="474" class="n">1700</text><text x="854" y="495" class="n">1500</text><text x="931" y="484.500" class="n">1600</text><text x="1009" y="506" class="n">1400</text><text x="1086" y="484.500" class="n">1600</text><text x="1164" y="495" class="n">1500</text>
</g>
<text x="699" y="687" class="c">小张</text><text x="776.500" y="687" class="c">小杨</text><text x="854" y="687" class="c">小王</text><text x="932" y="687" class="c">小赵</text><text x="1010" y="687" class="c">小陈</text><text x="1087" y="687" class="c">小李</text><text x="1165" y="687" class="c">小郑</text>
<text x="1186" y="691" style="font-weight:bold;fill:#595959">姓名</text>
<text x="602" y="457" style="font-weight:bold;fill:#595959">销</text><text x="602" y="469" style="font-weight:bold;fill:#595959">售</text><text x="602" y="481" style="font-weight:bold;fill:#595959">额</text>
<rect x="872" y="726" width="7" height="7" fill="#9e2a39"/><text x="881" y="733" style="fill:#595959;font-size:11.500px">1月</text>
<rect x="908" y="726" width="7" height="7" fill="#1c5a7d"/><text x="918" y="733" style="fill:#595959;font-size:11.500px">12月</text>

<!-- tooltip -->
<rect x="1101" y="749" width="48" height="21" fill="#000" opacity=".25"/>
<rect x="1098.500" y="746.500" width="47" height="20" fill="#d5dcea" stroke="#8a8a8a"/>
<text x="1104" y="761" fill="#555">图表区</text>

<!-- watermark -->
<rect x="1084" y="921" width="390" height="94" fill="#f5f5f5"/>
<rect x="1466" y="944" width="8" height="71" fill="#e9e9e9"/>
<path d="M1468 949h6l-3 3zM1468 967l3-3 3 3zM1468 983h6l-3 3z" fill="#999"/>
<text x="1095" y="963" style="font-family:'Noto Serif CJK SC','Noto Sans CJK SC',serif;font-weight:bold;font-size:40px;fill:#f22b27">电脑技术网</text>
<text x="1093" y="1004" textLength="205" lengthAdjust="spacingAndGlyphs" style="font-family:'Liberation Serif',serif;font-size:29px;fill:#2e84ea">www.tagxp.com</text>
<rect x="1311" y="921" width="155" height="94" rx="20" fill="#2d7ff9"/>
<text transform="translate(1388 993) scale(.84 1)" text-anchor="middle" style="font-family:'Liberation Sans',sans-serif;font-weight:bold;font-size:80px;fill:#f7f9fd">TAG</text>
<path d="M1317 992q6-16 28-17-16 5-18 13 6 8 22 6-20 10-32-2z" fill="#5a9cf5" opacity=".6"/>
<text x="1357" y="988" style="font-size:21px;fill:#4f86dc;opacity:.55">极光下载站</text>
<rect x="1340" y="1000" width="59" height="14" fill="#2a70e0"/>
<text x="1345" y="1012" style="font-size:12px;fill:#1f5fb8">CH</text><text x="1383" y="1012" style="font-size:12px;fill:#1f5fb8">简</text><text x="1400" y="1010" style="font-size:13px;fill:#2a6ecf">.xz7.com</text>
<path d="M1341 1015h58" stroke="#fff" stroke-width="2"/>
</svg>
</body>
</html>
